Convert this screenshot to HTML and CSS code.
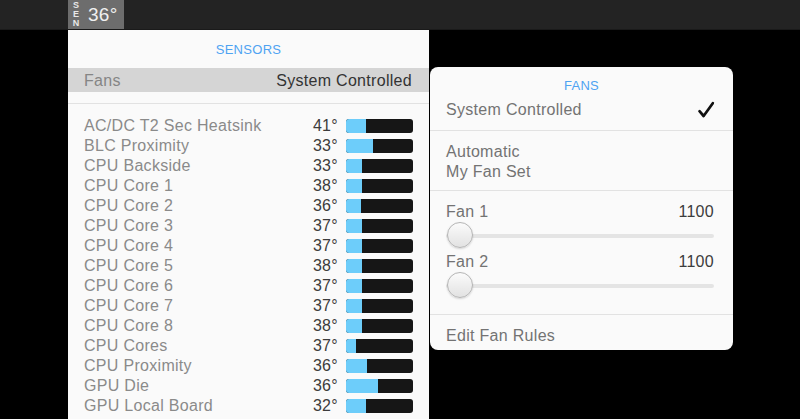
FILE: index.html
```html
<!DOCTYPE html>
<html>
<head>
<meta charset="utf-8">
<link rel="stylesheet" href="styles.css">
</head>
<body>
<div class="menubar">
  <div class="status">
    <div class="sen"><span>S</span><span>E</span><span>N</span></div>
    <div class="status-temp">36°</div>
  </div>
</div>
<div class="stage">
  <div class="sensors">
    <div class="title">SENSORS</div>
    <div class="fans-row"><span class="fans-label">Fans</span><span class="fans-value">System Controlled</span></div>
    <div class="sep"></div>
    <div class="rows">
      <div class="row"><span class="label">AC/DC T2 Sec Heatsink</span><span class="temp">41°</span><span class="bar"><span class="fill" style="width:20px"></span></span></div>
      <div class="row"><span class="label">BLC Proximity</span><span class="temp">33°</span><span class="bar"><span class="fill" style="width:27px"></span></span></div>
      <div class="row"><span class="label">CPU Backside</span><span class="temp">33°</span><span class="bar"><span class="fill" style="width:16px"></span></span></div>
      <div class="row"><span class="label">CPU Core 1</span><span class="temp">38°</span><span class="bar"><span class="fill" style="width:16px"></span></span></div>
      <div class="row"><span class="label">CPU Core 2</span><span class="temp">36°</span><span class="bar"><span class="fill" style="width:15px"></span></span></div>
      <div class="row"><span class="label">CPU Core 3</span><span class="temp">37°</span><span class="bar"><span class="fill" style="width:16px"></span></span></div>
      <div class="row"><span class="label">CPU Core 4</span><span class="temp">37°</span><span class="bar"><span class="fill" style="width:16px"></span></span></div>
      <div class="row"><span class="label">CPU Core 5</span><span class="temp">38°</span><span class="bar"><span class="fill" style="width:16px"></span></span></div>
      <div class="row"><span class="label">CPU Core 6</span><span class="temp">37°</span><span class="bar"><span class="fill" style="width:16px"></span></span></div>
      <div class="row"><span class="label">CPU Core 7</span><span class="temp">37°</span><span class="bar"><span class="fill" style="width:16px"></span></span></div>
      <div class="row"><span class="label">CPU Core 8</span><span class="temp">38°</span><span class="bar"><span class="fill" style="width:16px"></span></span></div>
      <div class="row"><span class="label">CPU Cores</span><span class="temp">37°</span><span class="bar"><span class="fill" style="width:10px"></span></span></div>
      <div class="row"><span class="label">CPU Proximity</span><span class="temp">36°</span><span class="bar"><span class="fill" style="width:21px"></span></span></div>
      <div class="row"><span class="label">GPU Die</span><span class="temp">36°</span><span class="bar"><span class="fill" style="width:32px"></span></span></div>
      <div class="row"><span class="label">GPU Local Board</span><span class="temp">32°</span><span class="bar"><span class="fill" style="width:20px"></span></span></div>
    </div>
  </div>
</div>
<div class="popover">
  <div class="pop-title">FANS</div>
  <div class="section sec-first">
    <div class="item item-check"><span>System Controlled</span>
      <svg class="check" width="18" height="18" viewBox="0 0 18 18"><path d="M2.5 10.2 L6.6 15 L15.8 2.2" fill="none" stroke="#111" stroke-width="2.7" stroke-linecap="round" stroke-linejoin="round"/></svg>
    </div>
  </div>
  <div class="section sec-auto">
    <div class="item">Automatic</div>
    <div class="item">My Fan Set</div>
  </div>
  <div class="section sec-fans">
    <div class="item fan-head"><span>Fan 1</span><span class="rpm">1100</span></div>
    <div class="slider"><span class="knob"></span><span class="track"></span></div>
    <div class="item fan-head"><span>Fan 2</span><span class="rpm">1100</span></div>
    <div class="slider"><span class="knob"></span><span class="track"></span></div>
  </div>
  <div class="section sec-last">
    <div class="item">Edit Fan Rules</div>
  </div>
</div>
</body>
</html>
```
FILE: styles.css
```css
html, body {
  margin: 0;
  padding: 0;
}
body {
  width: 800px;
  height: 419px;
  overflow: hidden;
  background: #000;
  font-family: "Liberation Sans", Arial, sans-serif;
  position: relative;
}
.menubar {
  height: 29px;
  background: #232323;
  display: flex;
  padding-left: 68px;
  border-bottom: 1px solid #1a1a1a;
}
.status {
  width: 56px;
  background: #6d6d6d;
  display: flex;
  align-items: center;
}
.sen {
  display: flex;
  flex-direction: column;
  margin-left: 4px;
  width: 8px;
  font-size: 9px;
  font-weight: bold;
  line-height: 9px;
  color: #e8e8e8;
  text-align: center;
}
.status-temp {
  margin-left: 8px;
  font-size: 19px;
  color: #f0f0f0;
  letter-spacing: 0.3px;
}
.stage {
  display: flex;
  padding-left: 68px;
}
.sensors {
  width: 361px;
  height: 389px;
  background: #fafafa;
}
.title {
  height: 38px;
  line-height: 39px;
  text-align: center;
  font-size: 13px;
  letter-spacing: 0.3px;
  color: #4ea3f2;
}
.fans-row {
  height: 24px;
  background: #d5d5d5;
  display: flex;
  align-items: center;
  justify-content: space-between;
  padding: 1px 17px 0 16px;
  box-sizing: border-box;
  font-size: 16px;
  letter-spacing: 0.3px;
}
.fans-label { color: #858585; }
.fans-value { color: #333; }
.sep {
  margin-top: 11px;
  height: 1px;
  background: #e2e2e2;
}
.rows {
  padding-top: 12px;
}
.row {
  height: 20px;
  display: flex;
  align-items: center;
  padding: 0 16px;
  font-size: 16px;
  letter-spacing: 0.3px;
}
.label {
  flex: 1;
  color: #8a8a8a;
}
.temp {
  color: #3c3c3c;
}
.bar {
  margin-left: 8px;
  width: 67px;
  height: 14px;
  border-radius: 3px;
  background: #161616;
  display: flex;
  overflow: hidden;
}
.fill {
  height: 100%;
  background: #6dcdfa;
}
.popover {
  position: absolute;
  left: 430px;
  top: 67px;
  width: 303px;
  height: 283px;
  background: #fafafa;
  border-radius: 8px;
  overflow: hidden;
}
.pop-title {
  padding-top: 10px;
  height: 18px;
  line-height: 18px;
  margin-bottom: 5px;
  text-align: center;
  font-size: 13px;
  letter-spacing: 0.3px;
  color: #4ea3f2;
}
.section {
  padding: 0 19px 0 16px;
  border-bottom: 1px solid #e2e2e2;
}
.sec-first { padding-bottom: 10px; }
.sec-auto { padding-top: 10px; padding-bottom: 9px; }
.sec-fans { padding-top: 10px; padding-bottom: 13px; }
.sec-last { padding-top: 10px; border-bottom: none; }
.item {
  height: 20px;
  line-height: 22px;
  font-size: 16px;
  letter-spacing: 0.3px;
  color: #737373;
}
.item-check {
  display: flex;
  justify-content: space-between;
  align-items: center;
}
.check {
  margin-right: -1px;
}
.fan-head {
  display: flex;
  justify-content: space-between;
}
.rpm {
  color: #3c3c3c;
}
.slider {
  height: 30px;
  display: flex;
  align-items: center;
  position: relative;
}
.track {
  flex: 1;
  height: 4px;
  border-radius: 2px;
  background: #e4e4e4;
}
.knob {
  position: absolute;
  left: 1px;
  top: 1px;
  width: 24px;
  height: 24px;
  border-radius: 50%;
  background: linear-gradient(#fbfbfb, #e2e2e2);
  border: 1px solid #b5b5b5;
  box-shadow: 0 1px 2px rgba(0,0,0,0.15);
}
```
